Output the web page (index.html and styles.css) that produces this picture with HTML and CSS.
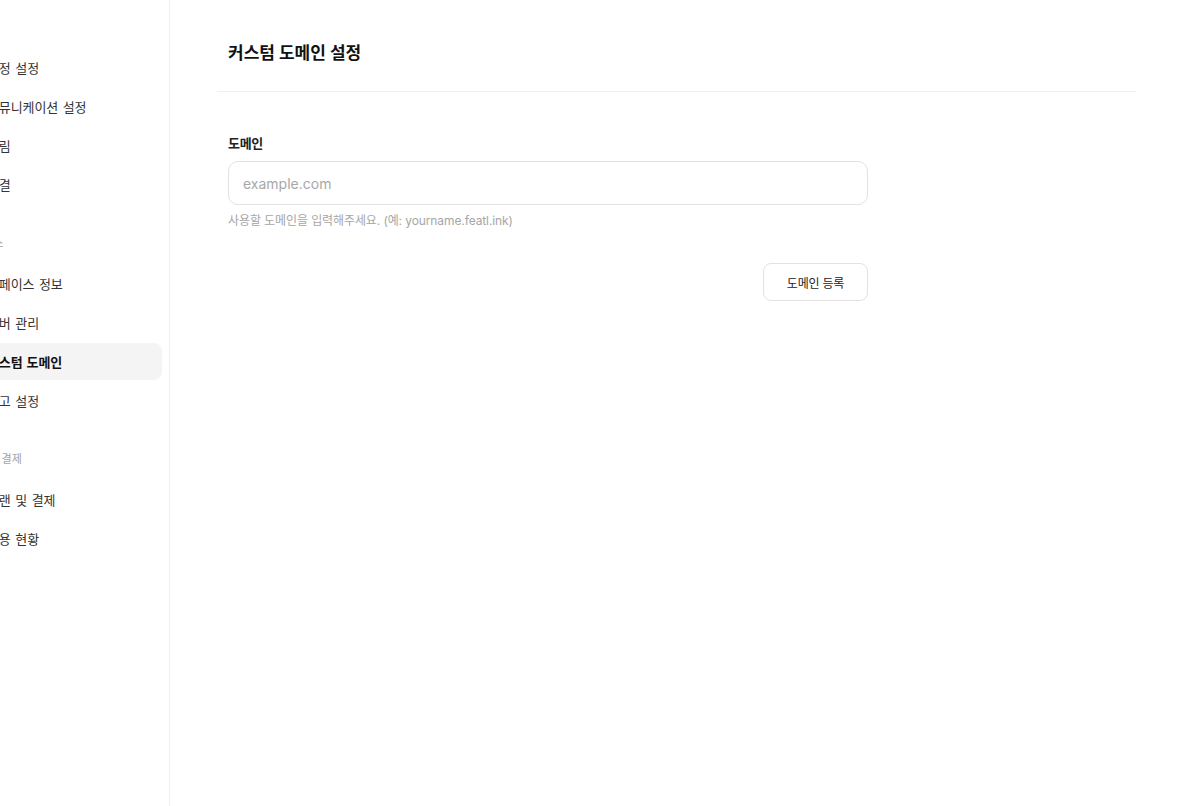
FILE: index.html
```html
<!DOCTYPE html>
<html lang="ko">
<head>
<meta charset="utf-8">
<title>커스텀 도메인 설정</title>
<link rel="stylesheet" href="styles.css">
</head>
<body>
<div class="app">
  <aside class="sidebar">
    <nav class="nav">
      <div class="section">
        <div class="section-title">계정</div>
        <ul class="items">
          <li class="item">계정 설정</li>
          <li class="item">커뮤니케이션 설정</li>
          <li class="item">알림</li>
          <li class="item">연결</li>
        </ul>
      </div>
      <div class="section">
        <div class="section-title">스페이스</div>
        <ul class="items">
          <li class="item">스페이스 정보</li>
          <li class="item">멤버 관리</li>
          <li class="item active">커스텀 도메인</li>
          <li class="item">광고 설정</li>
        </ul>
      </div>
      <div class="section">
        <div class="section-title">요금 및 결제</div>
        <ul class="items">
          <li class="item">플랜 및 결제</li>
          <li class="item">사용 현황</li>
        </ul>
      </div>
    </nav>
  </aside>
  <main class="main">
    <header class="page-header">
      <h1 class="page-title">커스텀 도메인 설정</h1>
    </header>
    <form class="form">
      <label class="label" for="domain">도메인</label>
      <input class="input" id="domain" type="text" placeholder="example.com">
      <p class="help">사용할 도메인을 입력해주세요. (예: yourname.featl.ink)</p>
      <div class="actions">
        <button class="btn" type="button">도메인 등록</button>
      </div>
    </form>
  </main>
</div>
</body>
</html>
```

FILE: styles.css
```css
* { box-sizing: border-box; }
html, body { margin: 0; padding: 0; background: #fff; }
body {
  font-family: Inter, "Noto Sans CJK KR", sans-serif;
  color: #222;
  width: 1184px;
  height: 806px;
  overflow: hidden;
}
.app {
  display: flex;
  height: 806px;
}
.sidebar {
  width: 170px;
  flex: none;
  border-right: 1px solid #efefef;
  overflow: hidden;
}
.nav {
  margin-left: -37px;
  padding: 19px 7px 0 0;
  display: flex;
  flex-direction: column;
  gap: 32px;
}
.section-title {
  font-size: 11px;
  line-height: 16px;
  color: #a3a3a3;
  letter-spacing: 0;
  word-spacing: 1px;
  margin-bottom: 14px;
  white-space: nowrap;
}
.items {
  list-style: none;
  margin: 0;
  padding: 0;
  display: flex;
  flex-direction: column;
  gap: 2px;
}
.item {
  height: 37px;
  display: flex;
  align-items: center;
  padding-left: 24px;
  font-size: 13px;
  letter-spacing: -0.1px;
  word-spacing: 1px;
  color: #333;
  border-radius: 8px;
  white-space: nowrap;
}
.item.active {
  background: #f4f4f4;
  color: #111;
  font-weight: 700;
}
.main {
  flex: 1;
  padding: 0 48px 0 47px;
}
.page-header {
  padding: 41px 11px 26px;
  border-bottom: 1px solid #f0f0f0;
}
.page-title {
  margin: 0;
  font-size: 17px;
  line-height: 24px;
  font-weight: 700;
  letter-spacing: 0;
  color: #111;
}
.form {
  width: 640px;
  margin-left: 11px;
  padding-top: 42px;
  display: flex;
  flex-direction: column;
}
.label {
  font-size: 13px;
  line-height: 18px;
  font-weight: 700;
  color: #222;
  letter-spacing: -0.3px;
  margin-bottom: 9px;
}
.input {
  height: 44px;
  width: 100%;
  border: 1px solid #e2e2e2;
  border-radius: 10px;
  padding: 0 14px;
  font-family: Inter, "Noto Sans CJK KR", sans-serif;
  font-size: 14px;
  color: #222;
  outline: none;
}
.input::placeholder { color: #a8a8a8; }
.help {
  margin: 8px 0 0;
  font-size: 12px;
  line-height: 16px;
  color: #a6a6a6;
  letter-spacing: -0.1px;
}
.actions {
  display: flex;
  justify-content: flex-end;
  margin-top: 34px;
}
.btn {
  width: 105px;
  height: 38px;
  background: #fff;
  border: 1px solid #e2e2e2;
  border-radius: 8px;
  font-family: Inter, "Noto Sans CJK KR", sans-serif;
  font-size: 12px;
  font-weight: 400;
  color: #222;
  letter-spacing: -0.2px;
  cursor: pointer;
}
```
